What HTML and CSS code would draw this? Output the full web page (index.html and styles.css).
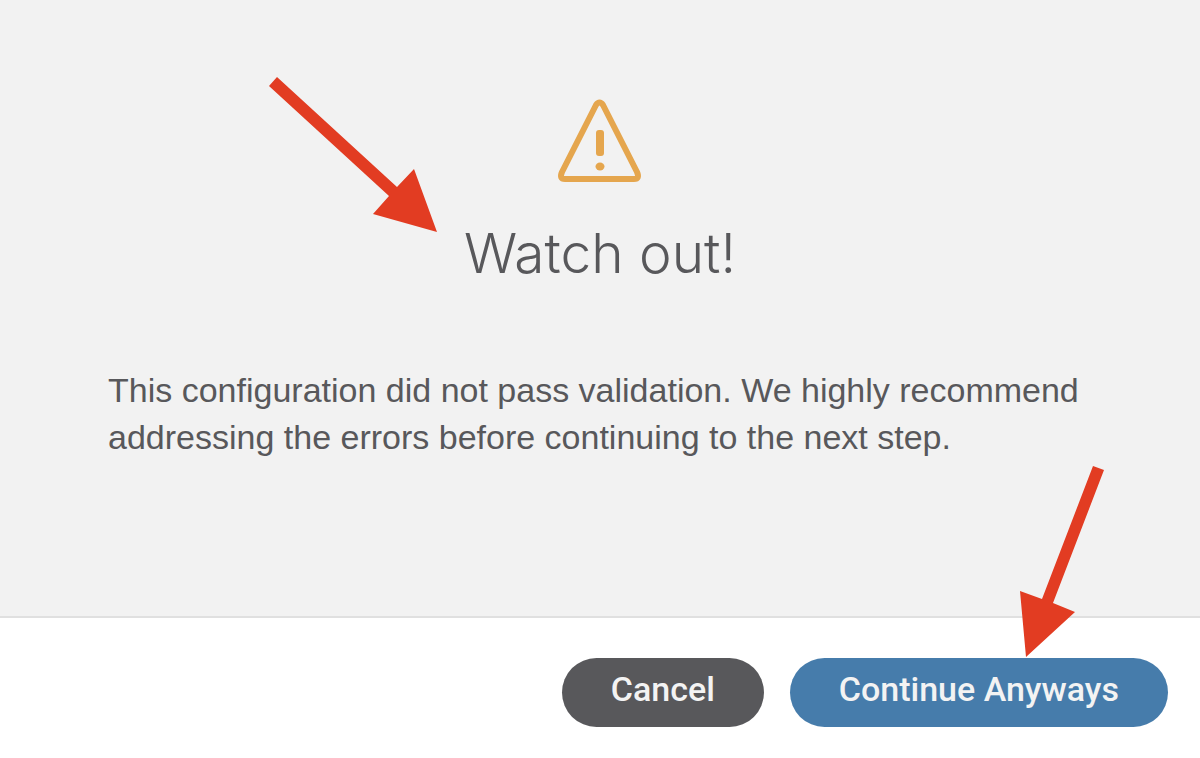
FILE: index.html
```html
<!DOCTYPE html>
<html lang="en">
<head>
<meta charset="utf-8">
<title>Watch out!</title>
<link rel="stylesheet" href="styles.css">
</head>
<body>
<main class="dialog">
  <section class="content">
    <svg class="warning" viewBox="0 0 88 88" aria-hidden="true">
      <path d="M40 9 Q43.500 4 47 9 L81 76 Q84 83 78 83 H9 Q3 83 6 76 Z" fill="none" stroke="#e5a64e" stroke-width="6" stroke-linejoin="round"/>
      <rect x="40" y="34" width="8" height="26" rx="3" fill="#e5a64e"/>
      <ellipse cx="44" cy="70.500" rx="4.500" ry="4" fill="#e5a64e"/>
    </svg>
    <h1 class="title">Watch out!</h1>
    <p class="message">This configuration did not pass validation. We highly recommend addressing the errors before continuing to the next step.</p>
    <svg class="arrow arrow-title" viewBox="0 0 170 156" aria-hidden="true">
      <path d="M9 1 L129 111 L146 93 L169 156 L105 138 L121 120 L1 10 Z" fill="#e23c22"/>
    </svg>
  </section>
  <footer class="actions">
    <button class="button cancel" type="button">Cancel</button>
    <button class="button continue" type="button">Continue Anyways</button>
    <svg class="arrow arrow-button" viewBox="0 0 86 192" aria-hidden="true">
      <path d="M75 1 L86 5 L35 138 L57 147 L8 192 L2 126 L24 134 Z" fill="#e23c22"/>
    </svg>
  </footer>
</main>
</body>
</html>
```
FILE: styles.css
```css
* {
  box-sizing: border-box;
}

body {
  margin: 0;
  font-family: Roboto, "Liberation Sans", Arial, sans-serif;
  color: #58585b;
  background: #fff;
}

.dialog {
  display: flex;
  flex-direction: column;
  min-height: 100vh;
}

.content {
  position: relative;
  flex: 1;
  display: flex;
  flex-direction: column;
  align-items: center;
  padding: 96px 108px 32px;
  background: #f2f2f2;
  border-bottom: 2px solid #e0e0e0;
}

.warning {
  width: 88px;
  height: 88px;
}

.title {
  margin: 37px 0 82px;
  font-family: Inter, "Liberation Sans", Arial, sans-serif;
  font-size: 55px;
  line-height: 64px;
  font-weight: 300;
}

.message {
  align-self: stretch;
  margin: 0;
  font-family: "Liberation Sans", Arial, sans-serif;
  font-size: 34px;
  line-height: 47px;
}

.actions {
  position: relative;
  display: flex;
  justify-content: flex-end;
  gap: 26px;
  padding: 40px 32px 31px;
}

.button {
  height: 69px;
  padding: 0 49px 8px;
  border: 0;
  border-radius: 35px;
  font-family: inherit;
  font-size: 34px;
  line-height: 40px;
  font-weight: 500;
  color: #f3f3f3;
}

.cancel {
  background: #58585b;
}

.continue {
  background: #467cab;
}

.arrow {
  position: absolute;
  pointer-events: none;
}

.arrow-title {
  left: 268px;
  top: 76px;
  width: 170px;
  height: 156px;
}

.arrow-button {
  right: 96px;
  bottom: 101px;
  width: 86px;
  height: 192px;
}
```
